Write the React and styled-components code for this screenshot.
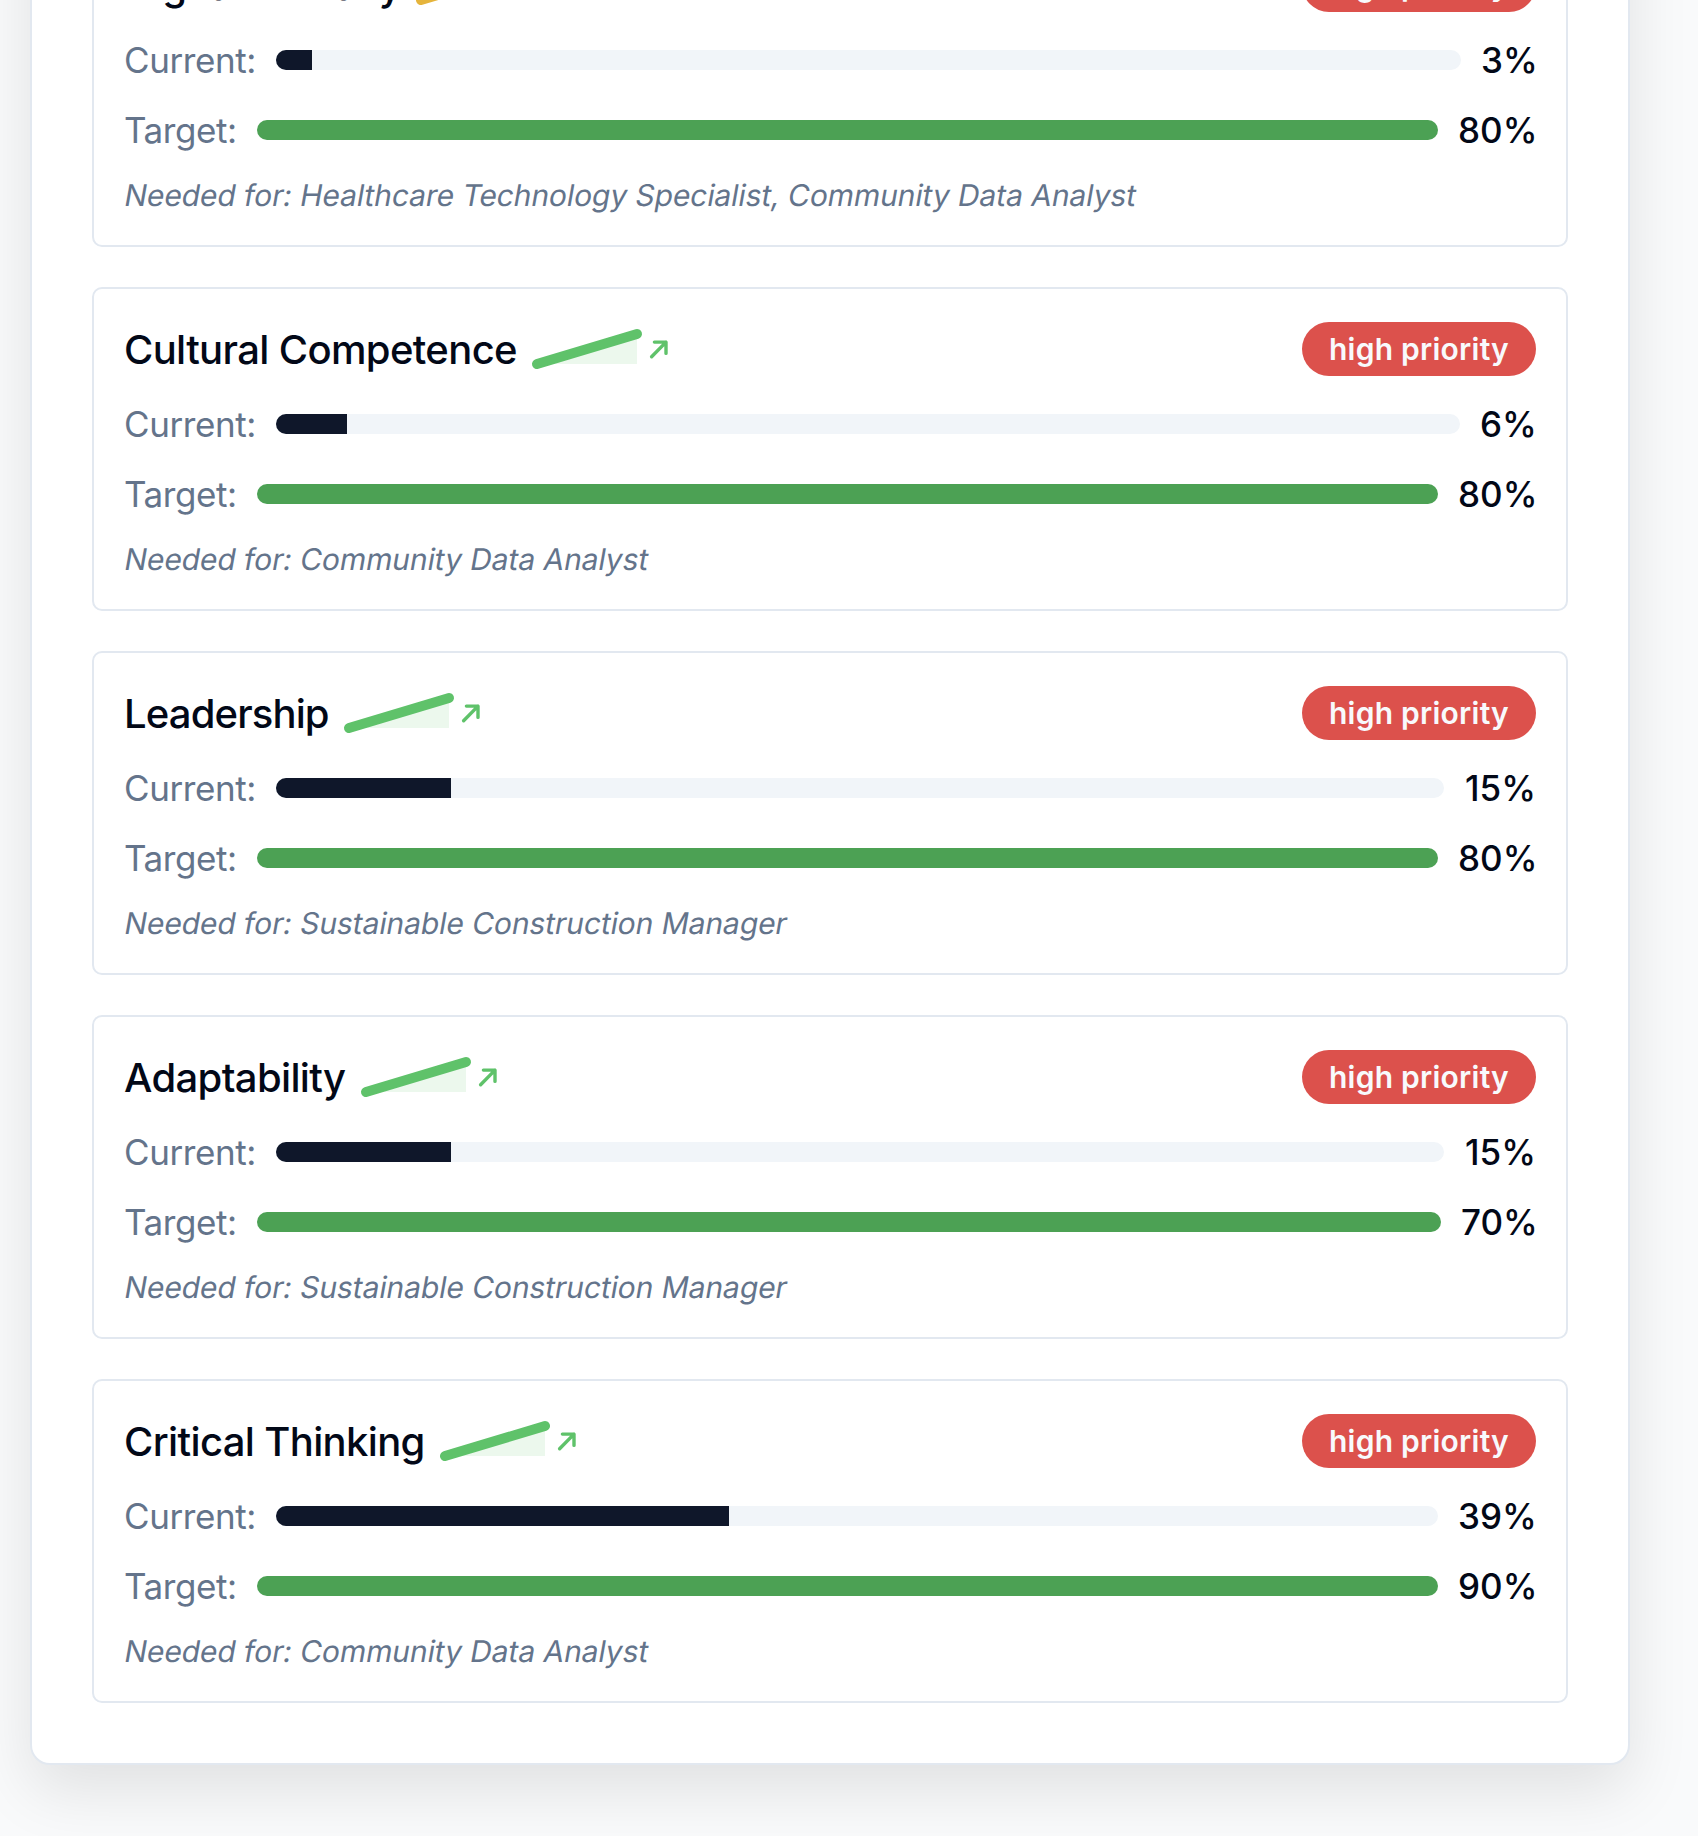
import React from "react";
import styled, { createGlobalStyle } from "styled-components";

const GlobalStyle = createGlobalStyle`
  *, *::before, *::after { box-sizing: border-box; }
  html, body { margin: 0; padding: 0; }
  body {
    height: 1836px;
    overflow: hidden;
    background: #f9fafb;
    color: #020817;
    font-family: Inter, "Liberation Sans", sans-serif;
  }
`;

const Page = styled.main`
  display: flex;
  flex-direction: column;
  justify-content: flex-end;
  height: 1836px;
  padding: 0 68px 71px 30px;
  overflow: hidden;
`;

const Panel = styled.section`
  display: flex;
  flex-direction: column;
  flex-shrink: 0;
  gap: 40px;
  padding: 60px;
  background: #fff;
  border: 2px solid #e2e8f0;
  border-radius: 20px;
  box-shadow: 0 25px 62px rgba(0, 0, 0, 0.1);
`;

const Card = styled.article`
  display: flex;
  flex-direction: column;
  gap: 20px;
  height: 324px;
  padding: 30px;
  border: 2px solid #e2e8f0;
  border-radius: 10px;
`;

const Header = styled.header`
  display: flex;
  align-items: center;
  justify-content: space-between;
  height: 60px;
`;

const TitleGroup = styled.div`
  display: flex;
  align-items: center;
`;

const Title = styled.h3`
  width: ${(p) => p.$width}px;
  margin: 0 20px 0 0;
  padding-top: 2px;
  font-size: 40px;
  font-weight: 500;
  line-height: 60px;
  letter-spacing: ${(p) => p.$tracking}px;
  white-space: nowrap;
`;

const Spark = styled.svg`
  display: block;
  overflow: visible;
  color: ${(p) => p.$color};
`;

const Arrow = styled.svg`
  display: block;
  margin-left: 10px;
  color: ${(p) => p.$color};
`;

const Badge = styled.span`
  width: 234px;
  padding: 5px 0 5px 25px;
  border: 2px solid transparent;
  border-radius: 27px;
  background: #dc514c;
  background-clip: border-box;
  color: #f8fafc;
  font-size: 30px;
  font-weight: 600;
  line-height: 40px;
  letter-spacing: 0.24px;
  white-space: nowrap;
`;

const Row = styled.div`
  display: flex;
  align-items: center;
  gap: 20px;
  height: 50px;
  font-size: 35px;
  line-height: 50px;
`;

const Label = styled.span`
  flex: 0 0 ${(p) => p.$width}px;
  min-width: 0;
  color: #64748b;
  letter-spacing: -0.42px;
  white-space: nowrap;
`;

const Track = styled.div`
  flex: 1;
  height: 20px;
  border-radius: 10px;
  background: ${(p) => (p.$full ? "#4ca154" : "#f1f5f9")};
  overflow: hidden;
`;

const Fill = styled.div`
  height: 100%;
  background: #0f172a;
`;

const Value = styled.span`
  flex: 0 0 ${(p) => p.$width}px;
  min-width: 0;
  font-weight: 500;
  text-align: right;
  white-space: nowrap;
`;

const Note = styled.p`
  align-self: flex-start;
  margin: 0 0 0 -1px;
  color: #64748b;
  font-size: 30px;
  line-height: 40px;
  letter-spacing: -0.09px;
  white-space: nowrap;
  transform: skewX(-10deg);
  transform-origin: 0 31px;
`;

const GREEN = "#5fc26a";
const YELLOW = "#e5b43c";

const VALUE_WIDTHS = { 3: 55, 6: 56, 15: 72, 39: 78, 70: 75, 80: 78, 90: 78 };

const skills = [
  { name: "Digital Literacy", width: 277, tracking: -0.4, current: 3, target: 80, color: YELLOW, roles: "Healthcare Technology Specialist, Community Data Analyst" },
  { name: "Cultural Competence", width: 393, tracking: -0.64, current: 6, target: 80, color: GREEN, roles: "Community Data Analyst" },
  { name: "Leadership", width: 205, tracking: -0.86, current: 15, target: 80, color: GREEN, roles: "Sustainable Construction Manager" },
  { name: "Adaptability", width: 222, tracking: -0.64, current: 15, target: 70, color: GREEN, roles: "Sustainable Construction Manager" },
  { name: "Critical Thinking", width: 300.5, tracking: -0.64, current: 39, target: 90, color: GREEN, roles: "Community Data Analyst" },
];

function Trend({ color }) {
  return (
    <>
      <Spark $color={color} width="100" height="30" viewBox="0 0 100 30">
        <path d="M0 30 L100 0 V30 Z" fill="currentColor" opacity="0.12" />
        <path d="M0 30 L100 0" stroke="currentColor" strokeWidth="10" strokeLinecap="round" />
      </Spark>
      <Arrow $color={color} width="24" height="24" viewBox="0 0 24 24" fill="none" stroke="currentColor" strokeWidth="3.4" strokeLinecap="round" strokeLinejoin="round">
        <path d="M4.6 19.8 L19 5.1 M7.4 5.1 H19 V16.4" />
      </Arrow>
    </>
  );
}

function SkillCard({ skill }) {
  return (
    <Card>
      <Header>
        <TitleGroup>
          <Title $width={skill.width} $tracking={skill.tracking}>{skill.name}</Title>
          <Trend color={skill.color} />
        </TitleGroup>
        <Badge>high priority</Badge>
      </Header>
      <Row>
        <Label $width={132}>Current:</Label>
        <Track><Fill style={{ width: `${skill.current}%` }} /></Track>
        <Value $width={VALUE_WIDTHS[skill.current]}>{skill.current}%</Value>
      </Row>
      <Row>
        <Label $width={113}>Target:</Label>
        <Track $full />
        <Value $width={VALUE_WIDTHS[skill.target]}>{skill.target}%</Value>
      </Row>
      <Note>Needed for: {skill.roles}</Note>
    </Card>
  );
}

export default function App() {
  return (
    <>
      <GlobalStyle />
      <Page>
        <Panel>
          {skills.map((skill) => <SkillCard key={skill.name} skill={skill} />)}
        </Panel>
      </Page>
    </>
  );
}
